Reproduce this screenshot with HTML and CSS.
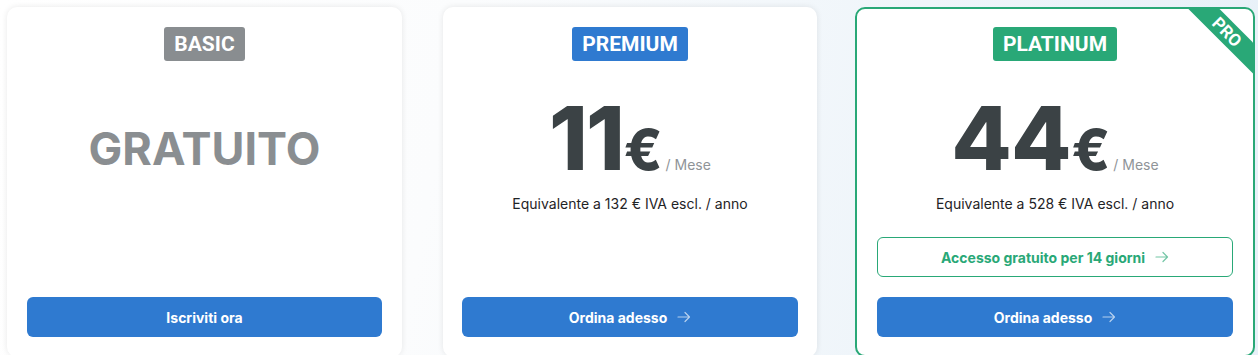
FILE: index.html
```html
<!DOCTYPE html>
<html lang="it">
<head>
<meta charset="utf-8">
<title>Piani</title>
<link rel="stylesheet" href="styles.css">
</head>
<body>
<div class="plans">
  <div class="card card-basic">
    <div class="badge badge-gray">BASIC</div>
    <div class="free">GRATUITO</div>
    <a class="btn btn-primary">Iscriviti ora</a>
  </div>
  <div class="card card-premium">
    <div class="badge badge-blue">PREMIUM</div>
    <div class="price"><span class="amount">11</span><span class="cur">€</span><span class="per">/ Mese</span></div>
    <div class="equiv">Equivalente a 132 € IVA escl. / anno</div>
    <a class="btn btn-primary">Ordina adesso <svg class="arrow" width="14" height="12" viewBox="0 0 14 12"><path d="M1 6H12.5M8 1.5L12.5 6L8 10.5" fill="none" stroke="currentColor" stroke-width="1.2" stroke-linecap="round" stroke-linejoin="round"/></svg></a>
  </div>
  <div class="card card-platinum">
    <div class="ribbon">PRO</div>
    <div class="badge badge-green">PLATINUM</div>
    <div class="price"><span class="amount">44</span><span class="cur">€</span><span class="per">/ Mese</span></div>
    <div class="equiv">Equivalente a 528 € IVA escl. / anno</div>
    <a class="btn btn-outline">Accesso gratuito per 14 giorni <svg class="arrow" width="14" height="12" viewBox="0 0 14 12"><path d="M1 6H12.5M8 1.5L12.5 6L8 10.5" fill="none" stroke="currentColor" stroke-width="1.2" stroke-linecap="round" stroke-linejoin="round"/></svg></a>
    <a class="btn btn-primary">Ordina adesso <svg class="arrow" width="14" height="12" viewBox="0 0 14 12"><path d="M1 6H12.5M8 1.5L12.5 6L8 10.5" fill="none" stroke="currentColor" stroke-width="1.2" stroke-linecap="round" stroke-linejoin="round"/></svg></a>
  </div>
</div>
</body>
</html>
```
FILE: styles.css
```css
html, body {
  margin: 0;
  padding: 0;
}
body {
  font-family: Inter, "Noto Sans", sans-serif;
  background: linear-gradient(100deg, #ffffff 0%, #fbfcfd 35%, #eff5fa 70%, #e7f0f8 100%);
  height: 355px;
  overflow: hidden;
}
.plans {
  display: flex;
  align-items: flex-start;
  padding: 7px 0 0 7px;
}
.card {
  position: relative;
  flex: none;
  box-sizing: border-box;
  height: 350px;
  background: #fff;
  border-radius: 10px;
  box-shadow: 0 0 6px rgba(0, 0, 0, 0.09);
  padding: 20px;
  display: flex;
  flex-direction: column;
  align-items: center;
  overflow: hidden;
}
.card-basic { width: 395px; margin-right: 41px; }
.card-premium { width: 374px; padding: 20px 19px; margin-right: 38px; }
.card-platinum {
  width: 400px;
  border: 2px solid #29a877;
  padding: 18px 20px;
  box-shadow: none;
}
.badge {
  height: 34px;
  line-height: 34px;
  padding: 0 10px;
  border-radius: 3px;
  color: #fff;
  font-family: Roboto, "Liberation Sans", sans-serif;
  font-weight: 700;
  font-size: 21px;
}
.badge-gray { background: #898d90; }
.badge-blue { background: #2f7ad0; }
.badge-green { background: #29a877; }
.free {
  margin-top: 65px;
  font-size: 45px;
  line-height: 46px;
  font-weight: 700;
  color: #8a8e91;
}
.price {
  margin-top: 33px;
  display: flex;
  align-items: baseline;
  color: #3b4245;
  line-height: 1;
}
.amount {
  font-size: 88px;
  font-weight: 800;
  letter-spacing: -2px;
}
.card-platinum .amount { letter-spacing: -1px; }
.cur {
  font-size: 56px;
  font-weight: 800;
  margin-left: 1px;
}
.per {
  font-size: 14px;
  color: #8f9498;
  margin-left: 3px;
}
.equiv {
  margin-top: 12px;
  font-size: 14px;
  line-height: 20px;
  color: #1f2326;
}
.btn {
  box-sizing: border-box;
  width: 100%;
  height: 40px;
  border-radius: 6px;
  display: flex;
  align-items: center;
  justify-content: center;
  font-size: 14px;
  font-weight: 700;
  text-decoration: none;
}
.btn-primary {
  margin-top: auto;
  background: #2f7ad0;
  color: #fff;
}
.btn-outline {
  margin-top: auto;
  margin-bottom: 20px;
  border: 1px solid #29a877;
  color: #29a877;
}
.btn-outline + .btn-primary { margin-top: 0; }
.arrow {
  margin-left: 10px;
  opacity: 0.65;
}
.ribbon {
  position: absolute;
  top: 12px;
  right: -34px;
  width: 120px;
  height: 22px;
  line-height: 22px;
  background: #29a877;
  color: #fff;
  text-align: center;
  font-family: Roboto, "Liberation Sans", sans-serif;
  font-weight: 700;
  font-size: 17px;
  transform: rotate(45deg);
}
```
